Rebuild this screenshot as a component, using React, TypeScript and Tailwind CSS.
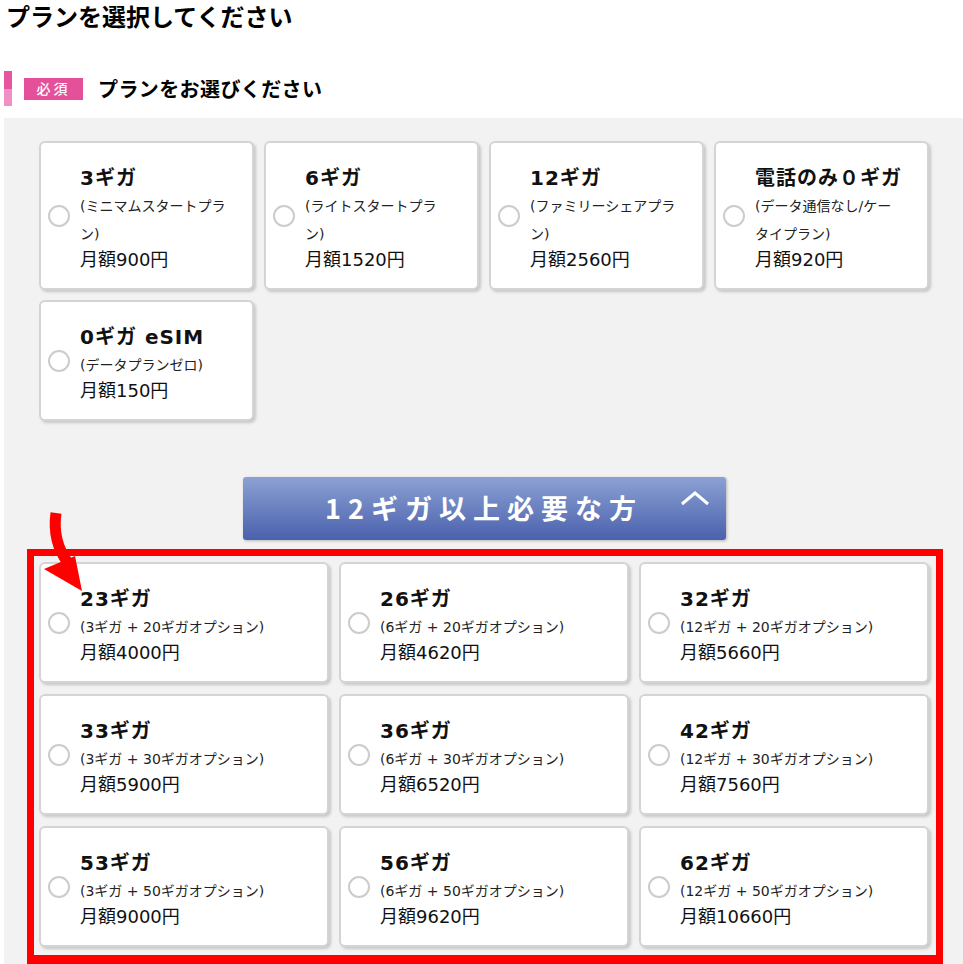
import React from "react";

type Plan = { title: string; sub: string; price: string };

const basePlans: Plan[] = [
  { title: "3ギガ", sub: "(ミニマムスタートプラン)", price: "月額900円" },
  { title: "6ギガ", sub: "(ライトスタートプラン)", price: "月額1520円" },
  { title: "12ギガ", sub: "(ファミリーシェアプラン)", price: "月額2560円" },
  { title: "電話のみ０ギガ", sub: "(データ通信なし/ケータイプラン)", price: "月額920円" },
  { title: "0ギガ eSIM", sub: "(データプランゼロ)", price: "月額150円" },
];

const bigPlans: Plan[] = [
  { title: "23ギガ", sub: "(3ギガ + 20ギガオプション)", price: "月額4000円" },
  { title: "26ギガ", sub: "(6ギガ + 20ギガオプション)", price: "月額4620円" },
  { title: "32ギガ", sub: "(12ギガ + 20ギガオプション)", price: "月額5660円" },
  { title: "33ギガ", sub: "(3ギガ + 30ギガオプション)", price: "月額5900円" },
  { title: "36ギガ", sub: "(6ギガ + 30ギガオプション)", price: "月額6520円" },
  { title: "42ギガ", sub: "(12ギガ + 30ギガオプション)", price: "月額7560円" },
  { title: "53ギガ", sub: "(3ギガ + 50ギガオプション)", price: "月額9000円" },
  { title: "56ギガ", sub: "(6ギガ + 50ギガオプション)", price: "月額9620円" },
  { title: "62ギガ", sub: "(12ギガ + 50ギガオプション)", price: "月額10660円" },
];

function PlanCard({ plan, narrow }: { plan: Plan; narrow?: boolean }) {
  return (
    <label className="flex items-center rounded-[6px] border-2 border-[#d4d4d4] bg-white pl-[7px] shadow-[2px_2px_3px_rgba(0,0,0,0.18)] cursor-pointer">
      <span className="w-[22px] h-[22px] shrink-0 rounded-full border-2 border-[#cccccc] bg-white" />
      <div className={narrow ? "ml-[10px] w-[148px] pt-[21px] pb-[16px]" : "ml-[10px] flex-1 pt-[21px] pb-[16px]"}>
        <p className="text-[20px] leading-[28px] font-bold tracking-[1px] text-[#111]">{plan.title}</p>
        <p className="text-[14px] leading-[28px] text-[#222]">{plan.sub}</p>
        <p className="text-[18px] leading-[24px] text-[#111]">{plan.price}</p>
      </div>
    </label>
  );
}

function Arrow() {
  return (
    <svg className="absolute left-[40px] top-[505px] z-10" width="50" height="90" viewBox="0 0 50 90">
      <path d="M16 8 Q12 36 28 58" stroke="#ff0000" strokeWidth="11" fill="none" />
      <polygon points="4,64 35,51 42,86" fill="#ff0000" />
    </svg>
  );
}

export default function App() {
  return (
    <div
      className="relative w-[963px] bg-white text-black"
      style={{ fontFamily: '"DejaVu Sans", "Noto Sans CJK JP", sans-serif' }}
    >
      <h1
        className="pl-[6px] text-[24px] leading-[32px] font-bold"
        style={{ fontFamily: '"Noto Sans CJK JP", sans-serif' }}
      >
        プランを選択してください
      </h1>

      <div className="mt-[39px] ml-[4px] flex items-center h-[35px]">
        <div className="flex flex-col w-[8px] h-[35px]">
          <div className="flex-1 bg-[#e8559f]" />
          <div className="flex-1 bg-[#f290c6]" />
        </div>
        <span
          className="ml-[12px] w-[59px] h-[22px] flex items-center justify-center bg-[#e4509a] text-white text-[14px] font-medium tracking-[3px]"
          style={{ fontFamily: '"Noto Sans CJK JP", sans-serif' }}
        >
          必須
        </span>
        <span
          className="ml-[15px] text-[20px] font-bold tracking-[0.4px]"
          style={{ fontFamily: '"Noto Sans CJK JP", sans-serif' }}
        >
          プランをお選びください
        </span>
      </div>

      <div className="mt-[12px] ml-[4px] bg-[#f2f2f2] pt-[23px] pl-[35px] pr-[34px]">
        <div className="grid grid-cols-4 gap-[10px] w-[890px]">
          {basePlans.map((p) => (
            <PlanCard key={p.title} plan={p} narrow />
          ))}
        </div>

        <button className="relative mt-[56px] mx-auto flex items-center justify-center w-[483px] h-[63px] rounded-[3px] bg-gradient-to-b from-[#8da1d4] to-[#4a61ac] shadow-[1px_1px_3px_rgba(0,0,0,0.25)]">
          <span
            className="text-white text-[27px] font-bold tracking-[7px]"
            style={{ fontFamily: '"Noto Sans CJK JP", sans-serif' }}
          >
            12ギガ以上必要な方
          </span>
          <svg className="absolute right-[16px] top-[14px]" width="30" height="15" viewBox="0 0 30 15">
            <polyline points="2,13 15,2 28,13" stroke="#fff" strokeWidth="3" fill="none" />
          </svg>
        </button>

        <div className="mt-[9px] ml-[-12px] w-[916px] border-[7px] border-b-[9px] border-[#ff0000] pt-[6px] pb-[8px] pl-[5px] pr-[7px]">
          <div className="grid grid-cols-3 gap-x-[10px] gap-y-[11px] w-[890px]">
            {bigPlans.map((p) => (
              <PlanCard key={p.title} plan={p} />
            ))}
          </div>
        </div>
      </div>

      <Arrow />
    </div>
  );
}
